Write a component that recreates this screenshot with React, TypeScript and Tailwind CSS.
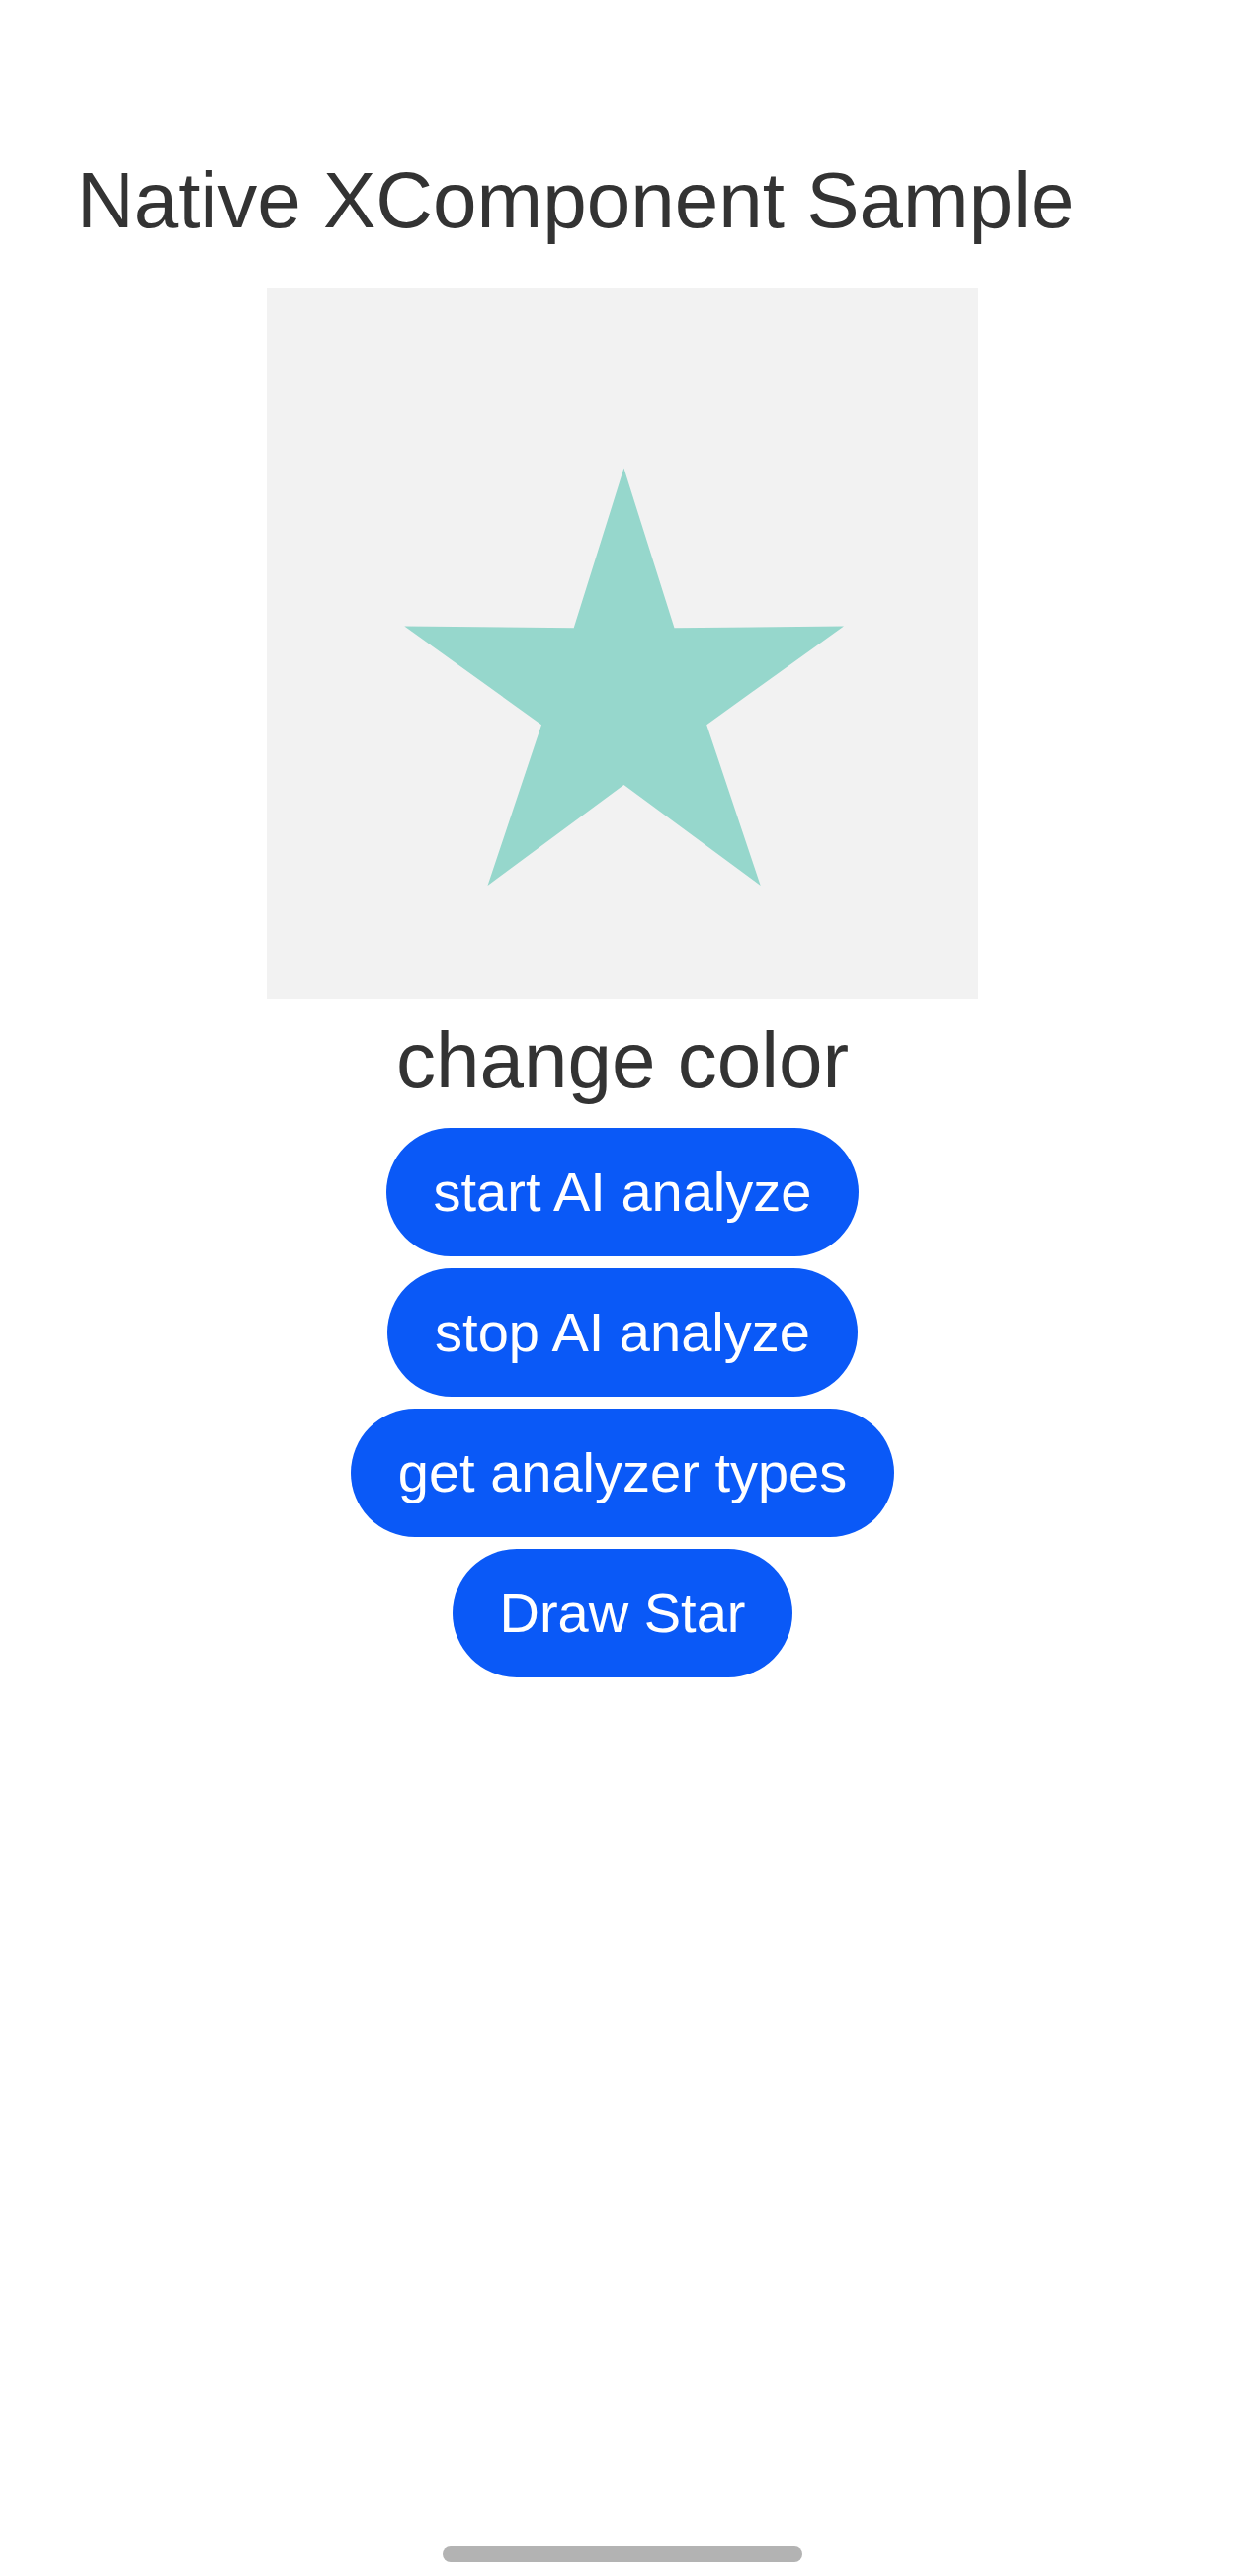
const buttons = ["start AI analyze", "stop AI analyze", "get analyzer types", "Draw Star"];

function Star() {
  return (
    <svg width="720" height="720" viewBox="0 0 720 720" className="block">
      <polygon
        points="361.4,182.6 412.5,344.3 584,342.4 445.2,442.2 499.7,605 361.4,503 223.5,605 278,442.2 139.3,342.4 310.7,344.3"
        fill="#96d7cc"
      />
    </svg>
  );
}

export default function App() {
  return (
    <div
      className="h-[2606px] w-full bg-white flex flex-col text-[#333333]"
      style={{ fontFamily: '"Liberation Sans", Arial, sans-serif' }}
    >
      <h1 className="pt-[163px] pl-[78px] text-[80px] leading-none font-normal whitespace-nowrap">
        Native XComponent Sample
      </h1>

      <div className="mt-[48px] flex flex-col items-center">
        <div className="w-[720px] h-[720px] bg-[#f2f2f2]">
          <Star />
        </div>

        <div className="mt-[22px] text-[80px] leading-none">change color</div>

        <div className="mt-[28px] flex flex-col items-center gap-[12px]">
          {buttons.map((label) => (
            <button
              key={label}
              className="h-[130px] px-[48px] rounded-full bg-[#0a59f7] text-white text-[56px] leading-none flex items-center justify-center whitespace-nowrap"
            >
              {label}
            </button>
          ))}
        </div>
      </div>

      <div className="mt-auto mb-[14px] mx-auto w-[364px] h-[16px] rounded-full bg-[#b3b3b3]" />
    </div>
  );
}
